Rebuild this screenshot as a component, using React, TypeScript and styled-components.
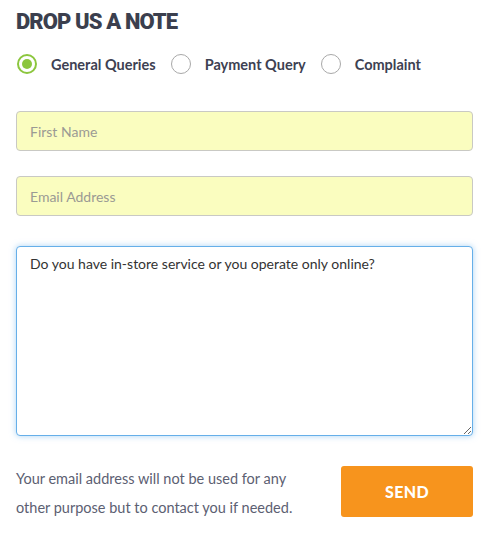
import styled, { createGlobalStyle } from "styled-components";

const GlobalStyle = createGlobalStyle`
  body {
    margin: 0;
    background: #ffffff;
    font-family: "Lato", "Liberation Sans", sans-serif;
  }
  * { box-sizing: border-box; }
`;

const Wrapper = styled.div`
  padding: 6px 16px 0 16px;
  width: 489px;
`;

const Title = styled.h2`
  margin: 0;
  font-family: "Roboto", "Liberation Sans", sans-serif;
  font-size: 22px;
  font-weight: 900;
  line-height: 32px;
  color: #3b3f4e;
  letter-spacing: -0.9px;
`;

const RadioGroup = styled.div`
  display: flex;
  align-items: center;
  margin-top: 14px;
  height: 24px;
`;

const RadioOption = styled.label`
  display: flex;
  align-items: center;
  margin-right: 14px;
  cursor: pointer;
`;

const RadioCircle = styled.span<{ $checked?: boolean }>`
  width: 20px;
  height: 20px;
  border-radius: 50%;
  border: ${(p) => (p.$checked ? "2px solid #8cc63e" : "1px solid #a8a8a8")};
  display: flex;
  align-items: center;
  justify-content: center;
  margin-left: 1px;
  margin-right: 14px;
  &::after {
    content: "";
    display: ${(p) => (p.$checked ? "block" : "none")};
    width: 10px;
    height: 10px;
    border-radius: 50%;
    background: #8cc63e;
  }
`;

const RadioLabel = styled.span`
  font-size: 14.5px;
  font-weight: 700;
  color: #3d4152;
`;

const Field = styled.input`
  display: block;
  width: 100%;
  height: 40px;
  background: #fafdbf;
  border: 1px solid #c9c9c4;
  border-radius: 4px;
  padding: 0 13px;
  font-family: "Lato", "Liberation Sans", sans-serif;
  font-size: 14px;
  color: #333;
  outline: none;
  &::placeholder {
    color: #9a9a94;
  }
`;

const FirstField = styled(Field)`
  margin-top: 35px;
`;

const NextField = styled(Field)`
  margin-top: 25px;
`;

const Message = styled.textarea`
  display: block;
  width: 100%;
  height: 190px;
  margin-top: 30px;
  border: 1px solid #66afe9;
  border-radius: 4px;
  box-shadow: 0 0 6px rgba(102, 175, 233, 0.55);
  padding: 7px 13px;
  font-family: "Lato", "Liberation Sans", sans-serif;
  font-size: 14px;
  line-height: 20px;
  color: #333;
  outline: none;
  resize: vertical;
`;

const Footer = styled.div`
  display: flex;
  justify-content: space-between;
  align-items: flex-start;
  margin-top: 30px;
`;

const Note = styled.p`
  margin: 0;
  margin-top: -2px;
  width: 295px;
  font-size: 14.5px;
  line-height: 29px;
  color: #5c6072;
`;

const SendButton = styled.button`
  width: 132px;
  height: 51px;
  background: #f7941d;
  border: none;
  border-radius: 3px;
  color: #ffffff;
  font-family: "Lato", "Liberation Sans", sans-serif;
  font-size: 16px;
  font-weight: 900;
  letter-spacing: 0.3px;
  cursor: pointer;
`;

const options = [
  { label: "General Queries", checked: true },
  { label: "Payment Query", checked: false },
  { label: "Complaint", checked: false },
];

export default function App() {
  return (
    <>
      <GlobalStyle />
      <Wrapper>
        <Title>DROP US A NOTE</Title>
        <RadioGroup>
          {options.map((o) => (
            <RadioOption key={o.label}>
              <RadioCircle $checked={o.checked} />
              <RadioLabel>{o.label}</RadioLabel>
            </RadioOption>
          ))}
        </RadioGroup>
        <FirstField placeholder="First Name" />
        <NextField placeholder="Email Address" />
        <Message defaultValue="Do you have in-store service or you operate only online?" />
        <Footer>
          <Note>
            Your email address will not be used for any other purpose but to
            contact you if needed.
          </Note>
          <SendButton>SEND</SendButton>
        </Footer>
      </Wrapper>
    </>
  );
}
